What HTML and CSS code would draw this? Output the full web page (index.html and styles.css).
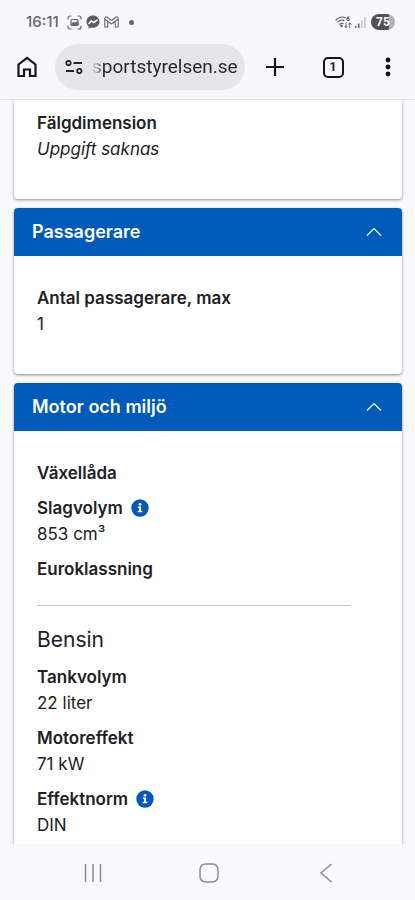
FILE: index.html
```html
<!DOCTYPE html>
<html lang="sv">
<head>
<meta charset="utf-8">
<meta name="viewport" content="width=device-width, initial-scale=1">
<title>Fordonsuppgifter</title>
<link rel="stylesheet" href="styles.css">
</head>
<body>
<header class="chrome">
  <div class="status">
    <span class="clock">16:11</span>
    <svg class="capture" width="15" height="15" viewBox="0 0 15 15" fill="none" stroke="#66666b" stroke-width="1.2" stroke-linecap="round">
      <path d="M1 4V3a2 2 0 0 1 2-2h1M11 1h1a2 2 0 0 1 2 2v1M14 11v1a2 2 0 0 1-2 2h-1M4 14H3a2 2 0 0 1-2-2v-1"/>
      <rect x="4" y="4.5" width="7" height="6" rx="1.2"/><path d="M4.5 9.5l2-2 1.5 1 1.500-1.500 1.500 1.500V10h-6z" fill="#66666b"/>
    </svg>
    <svg class="messenger" width="14" height="14" viewBox="0 0 14 14">
      <path d="M7 .5C3.300.5.5 3.200.5 6.800c0 1.900.8 3.500 2.100 4.600v2l2-1c.8.2 1.500.3 2.400.3 3.700 0 6.500-2.600 6.500-6C13.500 3.200 10.700.5 7 .5z" fill="#5c5c61"/>
      <path d="M3 8.500l2.500-2.700 2.300 1.700L11 5.200" fill="none" stroke="#f9f7fe" stroke-width="1.600" stroke-linejoin="round" stroke-linecap="round"/>
    </svg>
    <svg class="mail" width="15" height="12" viewBox="0 0 15 12" fill="none" stroke="#66666b" stroke-width="1.100" stroke-linejoin="round">
      <path d="M.8 11V2.200C.8.900 2.200.4 3.200 1.200L7.500 4.500l4.300-3.300c1-.8 2.400-.3 2.400 1V11h-3V5.300L7.500 8 3.800 5.300V11zM3.800 5.300L.9 3M11.200 5.300L14.100 3"/>
    </svg>
    <span class="dot"></span>
    <svg class="wifi" width="17" height="13" viewBox="0 0 17 13" fill="none" stroke="#66666b" stroke-width="1.200" stroke-linecap="round">
      <path d="M1 4c2.500-3 6.500-3.700 9.500-2.200M2.800 6.200c1.800-2 4.200-2.500 6.200-1.600M4.700 8.400c1-1.100 2.200-1.300 3.300-.8"/>
      <circle cx="6.500" cy="10" r=".7" fill="#66666b"/>
      <path d="M13.800.8c-2 0-2.400 3.700-.8 3.700 1.800 0 1.600-2.300 0-2.200"/>
      <path d="M11 7v4.500M9.700 10.200L11 11.600l1.300-1.400M14.800 11.500V7M13.500 8.300l1.300-1.400 1.300 1.400" stroke-width="1"/>
    </svg>
    <svg class="signal" width="11" height="11" viewBox="0 0 11 11">
      <path d="M0 9h1.500v2H0zM3 6.500h1.500V11H3z" fill="#6b6b70"/><path d="M6 3.500h1.500V11H6zM9 0h1.500v11H9z" fill="#c4c3ca"/>
    </svg>
    <span class="battery">75</span>
  </div>
  <div class="toolbar">
    <button class="tool" type="button" aria-label="Startsida">
      <svg width="20" height="22" viewBox="0 0 20 22" fill="none" stroke="#15151b" stroke-width="2.200"><path d="M1.500 8.500L10 2l8.500 6.500V20h-5.500v-6.500H7V20H1.500z"/></svg>
    </button>
    <form class="address">
      <button class="site" type="button" aria-label="Webbplatsinformation">
        <svg width="18" height="14" viewBox="0 0 18 14" fill="none" stroke="#25252b" stroke-width="1.800"><circle cx="3.500" cy="3" r="2.200"/><path d="M8.500 3H17M1 11h8"/><circle cx="14.300" cy="11" r="2.200"/></svg>
      </button>
      <input class="url" type="text" value="sportstyrelsen.se" aria-label="Webbadress">
    </form>
    <button class="tool plus" type="button" aria-label="Ny flik">
      <svg width="20" height="20" viewBox="0 0 20 20" stroke="#15151b" stroke-width="2.200"><path d="M10 1v18M1 10h18"/></svg>
    </button>
    <button class="tool tabs" type="button" aria-label="Flikar"><span class="count">1</span></button>
    <button class="tool more" type="button" aria-label="Meny">
      <svg width="6" height="20" viewBox="0 0 6 20" fill="#15151b"><circle cx="3" cy="3" r="2.400"/><circle cx="3" cy="10" r="2.400"/><circle cx="3" cy="17" r="2.400"/></svg>
    </button>
  </div>
</header>
<main class="page">
  <section class="card cut">
    <dl class="facts"><div><dt>Fälgdimension</dt><dd><em>Uppgift saknas</em></dd></div></dl>
  </section>
  <section class="card">
    <h2><button class="fold" type="button" aria-expanded="true">Passagerare
      <svg width="16" height="10" viewBox="0 0 16 10" fill="none" stroke="#fff" stroke-width="1.200"><path d="M1 8.500L8 1.500l7 7"/></svg></button></h2>
    <dl class="facts"><div><dt>Antal passagerare, max</dt><dd>1</dd></div></dl>
  </section>
  <section class="card">
    <h2><button class="fold" type="button" aria-expanded="true">Motor och miljö
      <svg width="16" height="10" viewBox="0 0 16 10" fill="none" stroke="#fff" stroke-width="1.200"><path d="M1 8.500L8 1.500l7 7"/></svg></button></h2>
    <div class="body">
      <dl class="facts">
        <div><dt>Växellåda</dt></div>
        <div><dt>Slagvolym
          <button class="info" type="button" aria-label="Om slagvolym"><svg width="18" height="18" viewBox="0 0 18 18"><circle cx="9" cy="9" r="8.700" fill="#0059bb"/><circle cx="9" cy="5.300" r="1.400" fill="#fff"/><path d="M6.800 7.500h3.300v4.200h1.200v1.600H6.700v-1.600h1.300V9.100H6.800z" fill="#fff"/></svg></button></dt><dd>853 cm³</dd></div>
        <div><dt>Euroklassning</dt></div>
      </dl>
      <hr>
      <h3>Bensin</h3>
      <dl class="facts">
        <div><dt>Tankvolym</dt><dd>22 liter</dd></div>
        <div><dt>Motoreffekt</dt><dd>71 kW</dd></div>
        <div><dt>Effektnorm
          <button class="info" type="button" aria-label="Om effektnorm"><svg width="18" height="18" viewBox="0 0 18 18"><circle cx="9" cy="9" r="8.700" fill="#0059bb"/><circle cx="9" cy="5.300" r="1.400" fill="#fff"/><path d="M6.800 7.500h3.300v4.200h1.200v1.600H6.700v-1.600h1.300V9.100H6.800z" fill="#fff"/></svg></button></dt><dd>DIN</dd></div>
      </dl>
    </div>
  </section>
</main>
<nav class="system" aria-label="Systemnavigering">
  <button type="button" aria-label="Senaste"><svg width="20" height="20" viewBox="0 0 20 20" stroke="#8b8b90" stroke-width="1.500"><path d="M2.500 1v18M10 1v18M17.500 1v18"/></svg></button>
  <button type="button" aria-label="Hem"><svg width="20" height="20" viewBox="0 0 20 20" fill="none" stroke="#8b8b90" stroke-width="1.500"><rect x="1" y="1" width="18" height="18" rx="5.500"/></svg></button>
  <button type="button" aria-label="Tillbaka"><svg width="20" height="20" viewBox="0 0 20 20" fill="none" stroke="#8b8b90" stroke-width="1.500"><path d="M15.500 1L5 10l10.500 9"/></svg></button>
</nav>
</body>
</html>
```
FILE: styles.css
```css
* { box-sizing: border-box; }
body {
  margin: 0;
  height: 100vh;
  display: grid;
  grid-template-columns: minmax(0, 1fr);
  grid-template-rows: auto minmax(0, 1fr) auto;
  background: #fafafd;
  color: #202124;
  font: 17px/26px Inter, sans-serif;
}
button { border: 0; padding: 0; background: none; color: inherit; font: inherit; }
svg { display: block; flex: none; }

.chrome { background: #f9f7fe; border-bottom: 1px solid #e0e0e5; }
.status { display: flex; align-items: center; height: 44px; padding: 0 20px 0 26px; }
.clock { font: 500 15px/20px Inter, sans-serif; color: #66666b; }
.capture { margin-left: 8px; }
.messenger { margin-left: 4px; }
.mail { margin-left: 4px; }
.dot { width: 5px; height: 5px; margin-left: 10px; border-radius: 50%; background: #66666b; }
.wifi { margin-left: auto; }
.signal { margin-left: 3px; }
.battery {
  width: 24px;
  margin-left: 5px;
  border-radius: 8px;
  background: linear-gradient(90deg, #505055 75%, #b0afb5 75%);
  color: #fff;
  font: 700 12px/16px Roboto, sans-serif;
  text-align: center;
}

.toolbar { display: flex; align-items: center; padding: 0 15px 9px; }
.tool { display: flex; flex: none; align-items: center; justify-content: center; width: 24px; height: 46px; }
.address {
  display: flex;
  flex: 1;
  align-items: center;
  min-width: 0;
  height: 46px;
  margin: 0 18px 0 16px;
  padding: 0 6px 0 10px;
  border-radius: 23px;
  background: #e7e5ec;
}
.url {
  flex: 1;
  min-width: 0;
  margin-left: 9px;
  padding: 0;
  border: 0;
  background: linear-gradient(90deg, #b5b4ba 4px, #25252b 12px);
  background-clip: text;
  color: transparent;
  font: 19px/24px Roboto, sans-serif;
}
.tabs { margin-left: 34px; }
.count { width: 21px; border: 2px solid #15151b; border-radius: 5px; font: 700 12px/17px Roboto, sans-serif; text-align: center; }
.more { margin-left: 31px; }

.page { overflow: hidden; padding: 0 13px 0 14px; }
.card {
  margin-bottom: 9px;
  border-radius: 4px;
  background: #fff;
  box-shadow: 0 1px 3px rgba(0, 0, 0, .45);
}
.cut { border-radius: 0 0 4px 4px; }
h2 { margin: 0; font-size: 18px; }
.fold {
  display: flex;
  align-items: center;
  justify-content: space-between;
  width: 100%;
  height: 48px;
  padding: 0 20px 0 18px;
  border-radius: 4px 4px 0 0;
  background: #005abc;
  color: #fff;
  font-weight: 600;
}
.facts { display: grid; gap: 9px; margin: 0; }
.card > .facts, .body { padding: 29px 23px 37px; }
.cut > .facts { padding-top: 10px; }
dt { display: flex; align-items: center; gap: 8px; font-weight: 600; }
dd { margin: 0; }
hr { margin: 23px 28px 21px 0; border: 0; border-top: 1px solid #c4c5c8; }
h3 { margin: 0 0 11px; font-size: 21px; font-weight: 400; }

.system { display: flex; height: 56px; padding: 0 31px 0 35px; }
.system button { display: flex; flex: 1; align-items: center; justify-content: center; padding-top: 2px; }
```
